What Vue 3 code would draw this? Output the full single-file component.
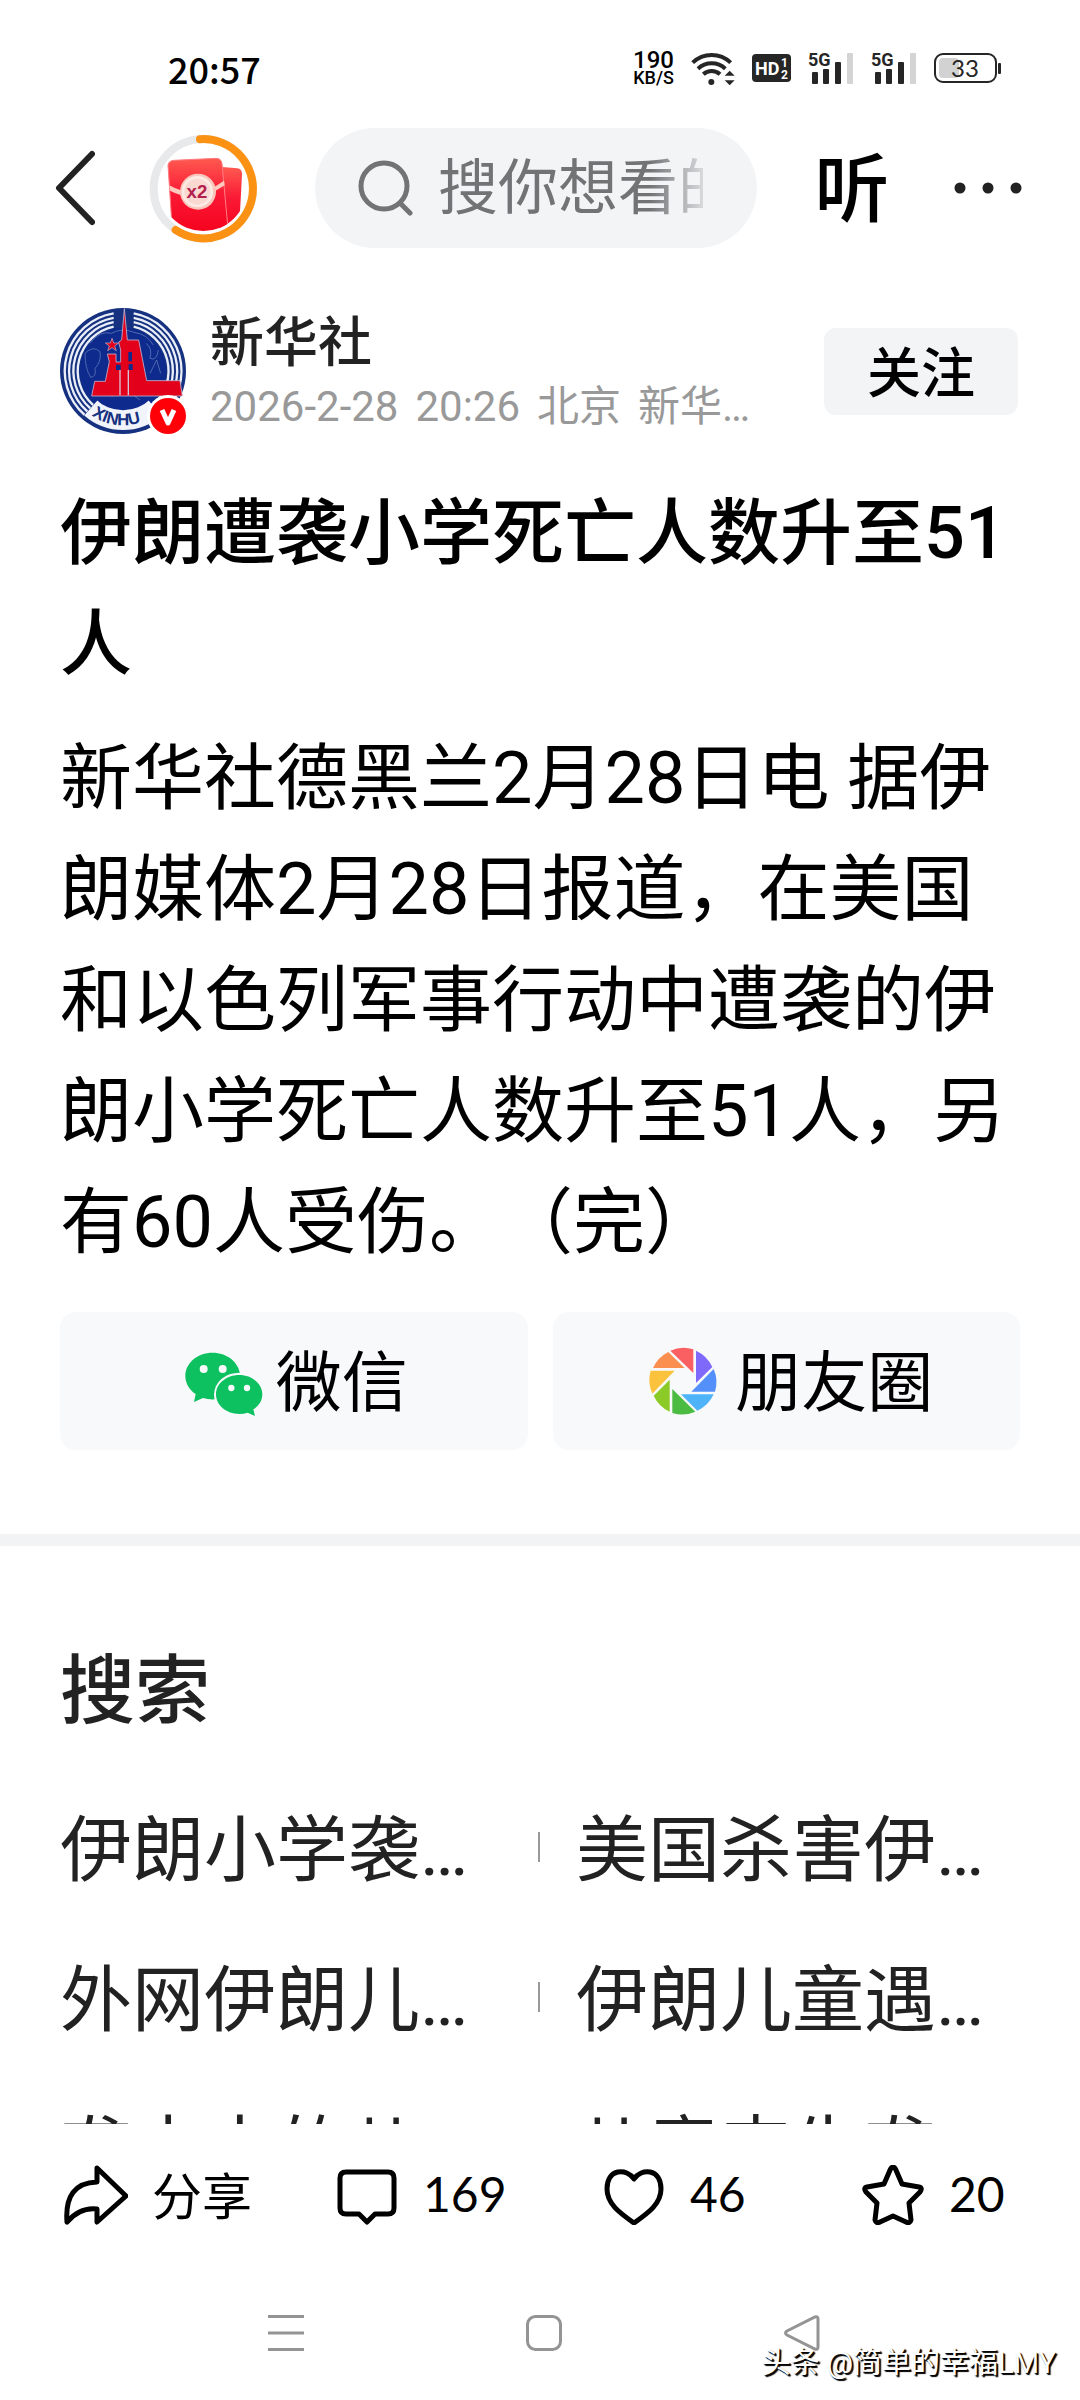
<template>
  <div class="app">
    <div class="status-bar">
      <span class="clock">20:57</span>
      <div class="status-icons">
        <span class="net-speed"><b>190</b><span>KB/S</span></span>
        <svg class="wifi" width="44" height="36" viewBox="0 0 132 108" fill="none" stroke="#262626">
          <path d="M5 38 A82 82 0 0 1 119 38" stroke-width="12" />
          <path d="M21 56 A60 60 0 0 1 103 56" stroke-width="12" />
          <path d="M37 73 A37 37 0 0 1 87 73" stroke-width="12" />
          <circle cx="61" cy="96" r="9" fill="#262626" stroke="none" />
          <path d="M116 62 L131 77 H101z M116 106 L131 91 H101z" fill="#262626" stroke="none" />
        </svg>
        <svg width="39" height="28" viewBox="0 0 39 28">
          <rect width="39" height="28" rx="4" fill="#262626" />
          <text x="3" y="21" class="hd-text">HD</text>
          <text x="29" y="13" class="hd-sub">1</text>
          <text x="29" y="25" class="hd-sub">2</text>
        </svg>
        <svg v-for="sim in 2" :key="sim" class="signal" width="46" height="34" viewBox="0 0 46 34">
          <text x="0" y="15" class="signal-text">5G</text>
          <g fill="#262626">
            <rect x="4" y="21" width="6" height="12" rx="1" />
            <rect x="15" y="18" width="6" height="15" rx="1" />
            <rect x="27" y="11" width="6" height="22" rx="1" />
          </g>
          <rect x="39" y="2" width="6" height="31" rx="1" fill="#d4d4d4" />
        </svg>
        <svg width="68" height="30" viewBox="0 0 68 30">
          <rect x="5" y="5" width="20" height="20" rx="4" fill="#d2d2d2" />
          <rect x="1" y="1" width="61" height="28" rx="8" fill="none" stroke="#262626" stroke-width="2" />
          <rect x="64" y="10" width="3" height="11" rx="1" fill="#262626" />
          <text x="31" y="24" text-anchor="middle" class="battery-text">33</text>
        </svg>
      </div>
    </div>

    <header class="header">
      <button class="back" aria-label="返回">
        <svg width="40" height="76" viewBox="0 0 40 76">
          <path d="M37 4 L4 38 L37 72" fill="none" stroke="#222" stroke-width="6" stroke-linecap="round" stroke-linejoin="round" />
        </svg>
      </button>
      <button class="reward" aria-label="红包">
        <svg width="130" height="125" viewBox="0 0 390 375">
          <defs>
            <linearGradient id="packet" x1="0" y1="0" x2="0" y2="1">
              <stop offset="0" stop-color="#ff5a50" />
              <stop offset="0.45" stop-color="#fa1a35" />
              <stop offset="1" stop-color="#f5001c" />
            </linearGradient>
            <clipPath id="reward-clip"><circle cx="190" cy="184" r="131" /></clipPath>
          </defs>
          <circle cx="190" cy="188" r="149" fill="none" stroke="#e8e9ea" stroke-width="24" />
          <path d="M180 39.5 A149 149 0 1 1 107 312" fill="none" stroke="#fb9214" stroke-width="24" stroke-linecap="round" />
          <g clip-path="url(#reward-clip)">
            <path d="M238 122 L292 127 Q307 129 306 146 L296 330 H238z" fill="url(#packet)" />
            <path d="M84 118 Q86 104 101 103 L228 97 Q244 97 246 113 L266 330 H98z" fill="url(#packet)" stroke="#ff7d83" stroke-width="3" />
            <path d="M88 178 Q170 225 252 164 L254 178 Q170 236 90 194z" fill="#ffc9bd" />
          </g>
          <circle cx="174" cy="197" r="54" fill="#f9c6bb" />
          <circle cx="172" cy="197" r="47" fill="#fdeae4" />
          <circle cx="172" cy="197" r="39" fill="#f9d9d2" />
          <text x="171" y="216" text-anchor="middle" class="reward-text">x2</text>
        </svg>
      </button>
      <label class="search">
        <svg width="56" height="56" viewBox="0 0 56 56" fill="none" stroke="#717375">
          <circle cx="26" cy="26" r="23" stroke-width="5" />
          <path d="M42 43 L52 53" stroke-width="5" stroke-linecap="round" />
        </svg>
        <input v-model="keyword" type="text" aria-label="搜索" placeholder="搜你想看的" />
      </label>
      <button class="listen">听</button>
      <button class="more" aria-label="更多">
        <svg width="68" height="12" viewBox="0 0 68 12" fill="#222">
          <circle cx="6" cy="6" r="5.5" />
          <circle cx="34" cy="6" r="5.5" />
          <circle cx="62" cy="6" r="5.5" />
        </svg>
      </button>
    </header>

    <main class="content">
      <article class="article">
        <div class="author">
          <div class="avatar">
            <svg width="126" height="126" viewBox="60 54 378 378">
              <circle cx="249" cy="243" r="189" fill="#15317f" />
              <circle cx="249" cy="243" r="130" fill="#0d2a8c" />
              <g fill="none" stroke="#e9eef8" stroke-width="7">
                <path v-for="r in [175, 162, 149, 136]" :key="r" :d="ring(r)" />
              </g>
              <path d="M153 353 A146 146 0 0 0 345 353" fill="none" stroke="#f1f4fb" stroke-width="62" />
              <circle cx="249" cy="243" r="118" fill="#0d2a8c" />
              <g fill="none" stroke="#5b74b4" stroke-width="2.5">
                <path d="M150 160 Q180 120 215 130 Q245 112 285 128 Q320 132 340 165" />
                <path d="M135 190 Q160 165 180 185 Q185 215 165 235 Q170 260 152 262 Q135 235 135 190" />
                <path d="M318 160 Q338 175 330 205 Q350 215 355 180 M330 250 L350 210 L362 250 M215 320 Q250 285 300 330" />
              </g>
              <path
                d="M253 56 L262 150 H296 L320 272 H420 L427 318 H155 L164 274 H196 L208 215 L202 192 H228 V216 H242 V180 L236 156 L245 150z"
                fill="#e2001a" stroke="#c5b5cf" stroke-width="2.5"
              />
              <path d="M216 145 L221 159 H236 L224 168 L229 182 L216 173 L203 182 L208 168 L196 159 H211z" fill="#e2001a" stroke="#c5b5cf" stroke-width="2" />
              <path d="M228 224 V240 H242 V224z M265 186 H276 V214 H265z M266 222 H278 V240 H266z" fill="#0d2a8c" />
              <path d="M240 240 V316 M265 240 V316" stroke="#d9c3d4" stroke-width="4" />
              <path id="avatar-arc" d="M132 356 A162 162 0 0 0 366 356" fill="none" />
              <text class="avatar-text"><textPath href="#avatar-arc" startOffset="30">XINHU</textPath></text>
            </svg>
            <svg class="verified" width="42" height="42" viewBox="0 0 42 42">
              <circle cx="21" cy="21" r="21" fill="#fff" />
              <circle cx="21" cy="21" r="18" fill="#fe0008" />
              <path d="M15 15 L21 28 L27 15" fill="none" stroke="#fff" stroke-width="5" stroke-linejoin="round" />
            </svg>
          </div>
          <div class="author-info">
            <a class="author-name" href="#">新华社</a>
            <div class="meta">
              <span>2026-2-28</span><span>20:26</span><span>北京</span><span>新华…</span>
            </div>
          </div>
          <button class="follow">关注</button>
        </div>

        <h1>伊朗遭袭小学死亡人数升至51人</h1>
        <p>
          新华社德黑兰2月28日电 据伊朗媒体2月28日报道，在美国和以色列军事行动中遭袭的伊朗小学死亡人数升至51人，另有60人受伤。（完）
        </p>

        <div class="share-row">
          <button class="share-btn">
            <svg width="84" height="84" viewBox="30 15 252 252" fill="#0dc160">
              <path d="M128 56 C82 56 46 87 46 126 C46 148 58 168 77 180 L72 204 L99 192 Q115 197 134 196 L210 118 C203 82 170 56 128 56z" />
              <ellipse cx="208" cy="182" rx="76" ry="66" fill="#f8f9fb" />
              <path d="M208 123 C169 123 138 149 138 181 C138 214 169 240 208 240 Q221 240 233 236 L255 246 L250 226 C267 216 277 200 277 181 C277 149 246 123 208 123z" />
              <g fill="#f8f9fb">
                <circle cx="101" cy="105" r="12" />
                <circle cx="158" cy="105" r="12" />
                <circle cx="184" cy="162" r="9.5" />
                <circle cx="231" cy="162" r="9.5" />
              </g>
            </svg>
            <span>微信</span>
          </button>
          <button class="share-btn">
            <svg width="84" height="84" viewBox="12 15 252 252">
              <path d="M106 50 A99 99 0 0 1 175 46 V117z" fill="#fa5f62" />
              <path d="M183 50 A99 99 0 0 1 232 99 L183 147z" fill="#7e69fb" />
              <path d="M236 105 A99 99 0 0 1 240 173 H169z" fill="#5490f9" />
              <path d="M236 181 A99 99 0 0 1 187 230 L138 181z" fill="#4eb3f9" />
              <path d="M181 233 A99 99 0 0 1 112 237 V165z" fill="#4bbb42" />
              <path d="M104 233 A99 99 0 0 1 56 185 L104 137z" fill="#8cca28" />
              <path d="M52 179 A99 99 0 0 1 47 110 H119z" fill="#fbc33d" />
              <path d="M54 102 A99 99 0 0 1 100 54 L149 102z" fill="#fb8f50" />
            </svg>
            <span>朋友圈</span>
          </button>
        </div>
      </article>

      <section class="related">
        <h2>搜索</h2>
        <ul>
          <li v-for="item in suggestions" :key="item"><a href="#">{{ item }}</a></li>
        </ul>
      </section>
    </main>

    <footer class="toolbar">
      <button>
        <svg width="64" height="60" viewBox="0 0 64 60">
          <path d="M33 3 L62 31 L33 57 V44 Q16 42 3 57 Q0 18 33 17z" />
        </svg>
        <span class="label">分享</span>
      </button>
      <button>
        <svg width="64" height="60" viewBox="0 0 64 60">
          <path d="M11 7 H53 Q59 7 59 13 V43 Q59 49 53 49 H40 L32 57 L24 49 H11 Q5 49 5 43 V13 Q5 7 11 7z" />
        </svg>
        <span>169</span>
      </button>
      <button>
        <svg width="64" height="60" viewBox="0 0 64 60">
          <path d="M32 14 C25 3 5 3 5 24 C5 39 18 48 32 58 C46 48 59 39 59 24 C59 3 39 3 32 14z" />
        </svg>
        <span>46</span>
      </button>
      <button>
        <svg width="64" height="60" viewBox="0 0 64 60">
          <path d="M29.500 4 Q32 0 34.500 4 L41 19 L58 22 Q62 23 59 27 L48 38 L50 55 Q49 59 45 57 L32 51 L19 57 Q15 59 14 55 L16 38 L5 27 Q2 23 6 22 L23 19z" />
        </svg>
        <span>20</span>
      </button>
    </footer>

    <nav class="system-nav">
      <button aria-label="最近任务">
        <svg width="36" height="36" viewBox="0 0 36 36"><path d="M0 1.500 H36 M0 18 H36 M0 34.500 H36" /></svg>
      </button>
      <button aria-label="主屏幕">
        <svg width="36" height="36" viewBox="0 0 36 36"><rect x="1.500" y="1.500" width="33" height="33" rx="8" /></svg>
      </button>
      <button aria-label="后退">
        <svg width="36" height="36" viewBox="0 0 36 36"><path d="M31 2 Q34 1 34 4 V32 Q34 35 31 34 L3 20 Q0 18 3 16z" /></svg>
      </button>
      <span class="watermark">头条 @简单的幸福LMY</span>
    </nav>
  </div>
</template>

<script setup>
import { ref } from "vue"

const keyword = ref("")

const suggestions = [
  "伊朗小学袭…",
  "美国杀害伊…",
  "外网伊朗儿…",
  "伊朗儿童遇…",
  "袭击中的儿…",
  "儿童丧生袭…",
]

// one white ring of the logo, open behind the spire and at the bottom
const ring = (r) => {
  const top = 243 - Math.sqrt(r * r - 28 * 28)
  const dx = r * 0.66
  const bottom = 243 + r * 0.75
  return (
    `M221 ${top} A${r} ${r} 0 0 0 ${249 - dx} ${bottom} ` +
    `M281 ${top} A${r} ${r} 0 0 1 ${249 + dx} ${bottom}`
  )
}
</script>

<style>
body {
  margin: 0;
  background-color: #fff;
}
</style>

<style scoped>
.app {
  display: flex;
  flex-direction: column;
  height: 100vh;
  overflow: hidden;
  background-color: #fff;
  color: #000;
  font-family: Roboto, "Noto Sans CJK SC", sans-serif;
  text-spacing-trim: space-all;
}

button {
  display: flex;
  align-items: center;
  justify-content: center;
  padding: 0;
  border: none;
  background: none;
  color: inherit;
  font: inherit;
  cursor: pointer;
}

a {
  color: inherit;
  text-decoration: none;
}

svg {
  display: block;
  flex-shrink: 0;
}

.status-bar {
  display: flex;
  align-items: center;
  justify-content: space-between;
  box-sizing: border-box;
  height: 128px;
  padding: 8px 78px 0 168px;
}

.clock {
  font-family: "Noto Sans CJK SC", sans-serif;
  font-size: 36px;
  font-weight: 500;
}

.status-icons {
  display: flex;
  align-items: center;
  gap: 17px;
}

.net-speed {
  display: flex;
  flex-direction: column;
  align-items: center;
  font-size: 18px;
  font-weight: 500;
  line-height: 16px;
}

.net-speed b {
  font-size: 24px;
  font-weight: 500;
  line-height: 20px;
}

.hd-text {
  fill: #fff;
  font-size: 18px;
  font-weight: 700;
}

.hd-sub {
  fill: #fff;
  font-size: 12px;
  font-weight: 700;
}

.signal-text {
  fill: #262626;
  font-size: 18px;
  font-weight: 700;
}

.battery-text {
  fill: #262626;
  font-family: Lato, sans-serif;
  font-size: 24px;
}

.header {
  display: flex;
  align-items: center;
  gap: 45px;
  height: 120px;
  padding: 0 52px 0 55px;
}

.reward-text {
  fill: #b3204e;
  font-family: "Liberation Sans", sans-serif;
  font-size: 56px;
  font-weight: 700;
}

.search {
  display: flex;
  flex: 1;
  align-items: center;
  gap: 24px;
  box-sizing: border-box;
  min-width: 0;
  height: 120px;
  padding: 0 54px 0 43px;
  border-radius: 60px;
  background-color: #f3f4f6;
}

.search input {
  flex: 1;
  min-width: 0;
  height: 90px;
  padding: 0;
  border: none;
  outline: none;
  background: none;
  color: #717375;
  font-family: inherit;
  font-size: 60px;
  mask-image: linear-gradient(to right, #000 80%, rgba(0, 0, 0, 0.2));
}

.search input::placeholder {
  color: #717375;
  opacity: 1;
}

.listen {
  width: 100px;
  padding-top: 4px;
  font-size: 75px;
  font-weight: 500;
  line-height: 100px;
}

.more {
  width: 81px;
  height: 80px;
}

.content {
  flex: 1;
  min-height: 0;
  overflow: hidden;
}

.article {
  padding: 60px 60px 84px;
  border-bottom: 12px solid #f2f3f5;
}

.author {
  display: flex;
  align-items: center;
  padding-right: 2px;
}

.avatar {
  position: relative;
}

.verified {
  position: absolute;
  right: -3px;
  bottom: -3px;
}

.avatar-text {
  fill: #15317f;
  font-family: "Liberation Sans", sans-serif;
  font-size: 50px;
  font-weight: 700;
}

.author-info {
  flex: 1;
  min-width: 0;
  height: 120px;
  margin-left: 24px;
}

.author-name {
  display: block;
  color: #222;
  font-size: 54px;
  font-weight: 500;
  line-height: 66px;
}

.meta {
  display: flex;
  gap: 17px;
  color: #999;
  font-size: 42px;
  line-height: 60px;
  white-space: nowrap;
}

.follow {
  width: 194px;
  height: 87px;
  padding-bottom: 4px;
  border-radius: 12px;
  background-color: #f3f4f6;
  font-size: 54px;
  font-weight: 500;
}

h1 {
  margin: 44px 0 23px;
  font-size: 72px;
  font-weight: 500;
  line-height: 111px;
}

p {
  margin: 0 0 34px;
  font-size: 72px;
  line-height: 111px;
}

.share-row {
  display: grid;
  grid-template-columns: 1fr 1fr;
  gap: 25px;
}

.share-btn {
  gap: 12px;
  height: 138px;
  border-radius: 16px;
  background-color: #f8f9fb;
  font-size: 66px;
}

.share-btn span {
  padding-bottom: 8px;
}

.related {
  padding: 95px 64px 0 60px;
  color: #222;
}

h2 {
  margin: 0 0 31px;
  font-size: 75px;
  font-weight: 500;
  line-height: 100px;
}

ul {
  display: grid;
  grid-template-columns: 1fr 1fr;
  margin: 0;
  padding: 0;
  list-style: none;
}

li {
  display: flex;
  align-items: center;
  height: 150px;
  font-size: 72px;
  white-space: nowrap;
}

li a {
  padding-bottom: 8px;
}

li:nth-child(even)::before {
  content: "";
  width: 2px;
  height: 30px;
  margin-right: 36px;
  background-color: #999;
}

.toolbar {
  display: grid;
  grid-template-columns: 271fr 267fr 259fr 155fr;
  align-items: center;
  height: 142px;
  padding: 0 64px;
  background-color: #fff;
}

.toolbar button {
  justify-content: flex-start;
  gap: 24px;
  font-family: Lato, "Noto Sans CJK SC", sans-serif;
  font-size: 48px;
}

.toolbar span {
  padding-bottom: 4px;
}

.toolbar .label {
  font-size: 50px;
}

.toolbar path {
  fill: none;
  stroke: #000;
  stroke-width: 5;
  stroke-linejoin: round;
}

.system-nav {
  position: relative;
  display: flex;
  align-items: center;
  justify-content: center;
  gap: 222px;
  height: 134px;
  padding-left: 8px;
}

.system-nav svg {
  fill: none;
  stroke: #949494;
  stroke-width: 3;
}

.watermark {
  position: absolute;
  right: 24px;
  bottom: 17px;
  color: #fff;
  font-size: 29px;
  line-height: 40px;
  text-shadow: 1px 1px 1px #000, 2px 2px 1px #000;
}
</style>
